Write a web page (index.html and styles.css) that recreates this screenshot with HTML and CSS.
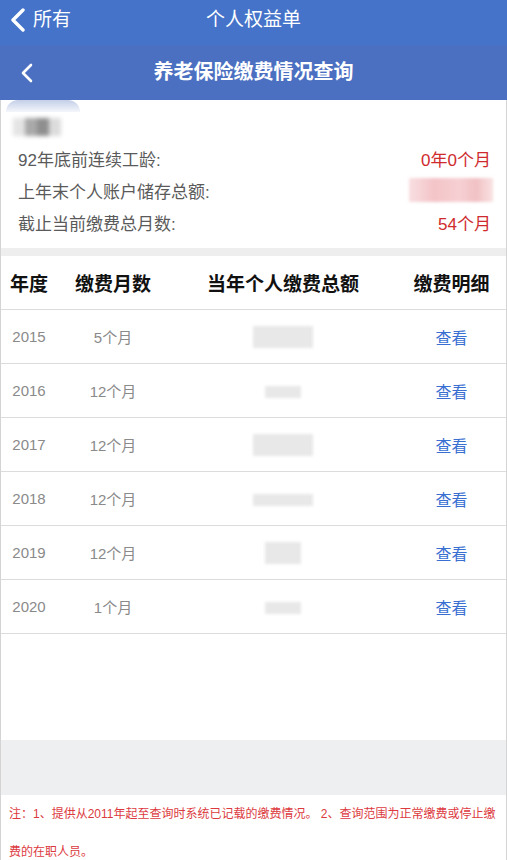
FILE: index.html
```html
<!DOCTYPE html>
<html lang="zh-CN">
<head>
<meta charset="utf-8">
<title>养老保险缴费情况查询</title>
<link rel="stylesheet" href="styles.css">
</head>
<body>
<header class="topbar">
  <div class="back-all">
    <svg class="chev-big" width="18" height="24" viewBox="0 0 18 24"><path d="M14 2 L4 12 L14 22" fill="none" stroke="#fff" stroke-width="3.4" stroke-linecap="round" stroke-linejoin="round"/></svg>
    <span>所有</span>
  </div>
  <div class="top-title">个人权益单</div>
</header>
<div class="subbar">
  <svg class="chev-small" width="14" height="20" viewBox="0 0 14 20"><path d="M11 2 L3 10 L11 18" fill="none" stroke="#fff" stroke-width="2.6" stroke-linecap="round" stroke-linejoin="round"/></svg>
  <div class="sub-title">养老保险缴费情况查询</div>
</div>
<main class="page">
  <section class="info">
    <div class="avatar"></div>
    <div class="name-blur"></div>
    <div class="info-row"><span>92年底前连续工龄:</span><span class="val">0年0个月</span></div>
    <div class="info-row"><span>上年末个人账户储存总额:</span><span class="val"><span class="pink-blur"></span></span></div>
    <div class="info-row"><span>截止当前缴费总月数:</span><span class="val">54个月</span></div>
  </section>
  <div class="gap"></div>
  <section class="table">
    <div class="trow thead">
      <div>年度</div><div>缴费月数</div><div>当年个人缴费总额</div><div>缴费明细</div>
    </div>
    <div class="trow"><div>2015</div><div>5个月</div><div><span class="amt w60"></span></div><div class="link">查看</div></div>
    <div class="trow"><div>2016</div><div>12个月</div><div><span class="amt w36 short"></span></div><div class="link">查看</div></div>
    <div class="trow"><div>2017</div><div>12个月</div><div><span class="amt w60"></span></div><div class="link">查看</div></div>
    <div class="trow"><div>2018</div><div>12个月</div><div><span class="amt w60 short"></span></div><div class="link">查看</div></div>
    <div class="trow"><div>2019</div><div>12个月</div><div><span class="amt w36"></span></div><div class="link">查看</div></div>
    <div class="trow"><div>2020</div><div>1个月</div><div><span class="amt w36 short"></span></div><div class="link">查看</div></div>
  </section>
  <div class="spacer"></div>
  <div class="grey-band"></div>
  <p class="note">注：1、提供从2011年起至查询时系统已记载的缴费情况。 2、查询范围为正常缴费或停止缴费的在职人员。</p>
</main>
</body>
</html>
```
FILE: styles.css
```css
* { box-sizing: border-box; }
html, body { margin: 0; padding: 0; }
body {
  width: 507px;
  background: #fff;
  font-family: "Liberation Sans", "Noto Sans CJK SC", sans-serif;
  overflow: hidden;
}
.topbar {
  height: 45px;
  background: #4473c9;
  display: flex;
  align-items: center;
  position: relative;
  color: #fff;
}
.back-all {
  position: relative;
  z-index: 1;
  display: flex;
  align-items: center;
  gap: 6px;
  padding-left: 9px;
  margin-top: -5px;
  font-size: 19px;
  line-height: 26px;
}
.chev-big { display: block; }
.top-title {
  position: absolute;
  left: 0; right: 0;
  top: 0;
  text-align: center;
  font-size: 19px;
  line-height: 40px;
}
.subbar {
  height: 55px;
  background: #4b6fc1;
  display: flex;
  align-items: center;
  position: relative;
  color: #fff;
}
.chev-small { margin-left: 20px; display: block; }
.sub-title {
  position: absolute;
  left: 0; right: 0;
  text-align: center;
  font-size: 20px;
  font-weight: bold;
  top: 13px;
  line-height: 28px;
}
.page {
  border-left: 1px solid #d4d4d4;
  border-right: 1px solid #d4d4d4;
}
.info {
  height: 148px;
  padding: 0 15px 0 17px;
}
.avatar {
  width: 74px;
  height: 12px;
  margin-left: -12px;
  border-radius: 37px 37px 0 0;
  background: linear-gradient(#c3cfe8, #f4f6fb);
}
.name-blur {
  width: 48px;
  height: 18px;
  margin: 6px 0 6px -5px;
  background: linear-gradient(90deg, #e4e4e4 0 25%, #a9a9a9 25% 50%, #8f8f8f 50% 75%, #dcdcdc 75%);
  filter: blur(2px);
}
.info-row {
  height: 32px;
  display: flex;
  align-items: center;
  justify-content: space-between;
  font-size: 17px;
  color: #5a5a5a;
}
.val { color: #cf2a2e; }
.pink-blur {
  display: inline-block;
  width: 84px;
  height: 24px;
  margin-right: -2px;
  vertical-align: middle;
  background: linear-gradient(90deg, #f9dfe1, #f3c4c8 30%, #f6d0d3 60%, #f1c1c4 80%, #f9e2e3);
  filter: blur(1.5px);
}
.gap { height: 8px; background: #eeeeee; }
.trow {
  display: grid;
  grid-template-columns: 56px 112px 228px 1fr;
  height: 54px;
  align-items: center;
  text-align: center;
  border-bottom: 1px solid #dcdcdc;
  font-size: 15px;
  color: #8a8a8a;
}
.thead {
  font-size: 19px;
  font-weight: bold;
  color: #111;
}
.link { color: #3a6fd2; font-size: 16px; }
.amt {
  display: inline-block;
  height: 22px;
  vertical-align: middle;
  background: #e8e8e8;
  filter: blur(1.5px);
}
.amt.short { height: 12px; }
.w60 { width: 60px; }
.w36 { width: 36px; }
.spacer { height: 106px; }
.grey-band { height: 55px; background: #eeeff1; }
.note {
  margin: 0;
  padding: 0 2px 0 8px;
  font-size: 12px;
  line-height: 38px;
  color: #dc3a3e;
}
```
